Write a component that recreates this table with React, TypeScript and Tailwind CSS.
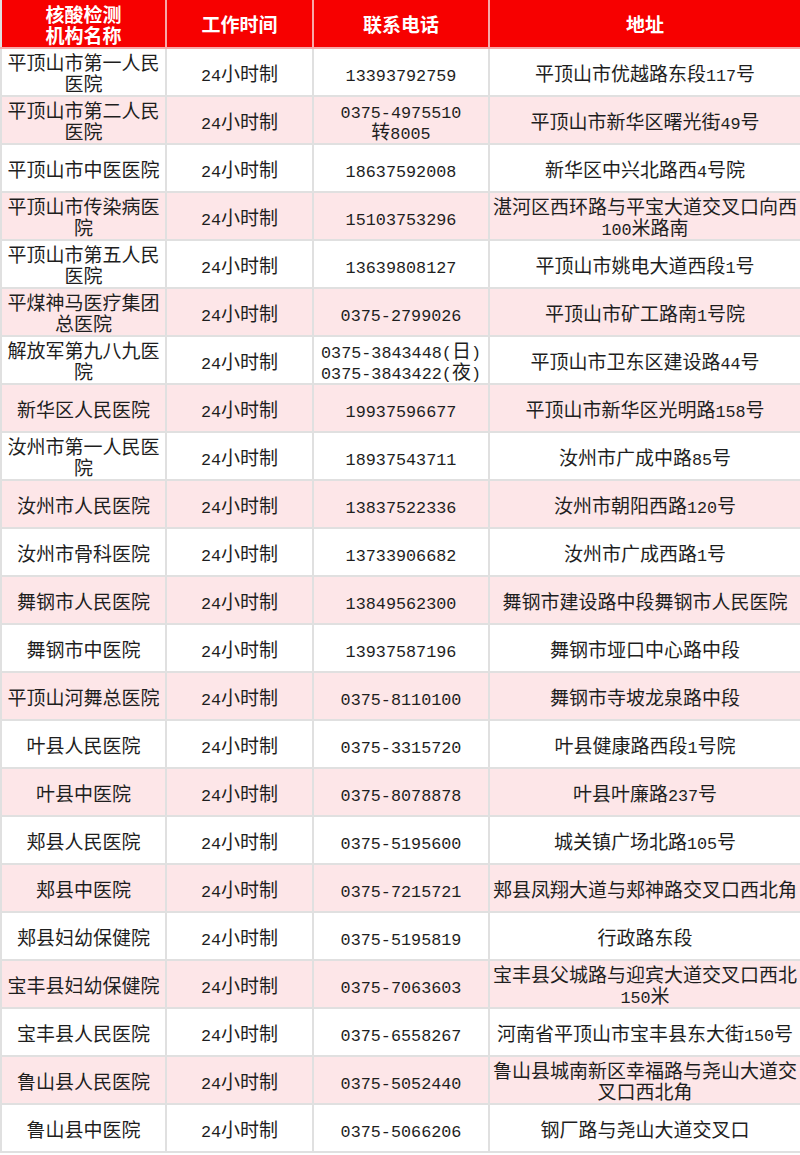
const ROWS: [string, string, string][] = [
  ["平顶山市第一人民\n医院", "13393792759", "平顶山市优越路东段117号"],
  ["平顶山市第二人民\n医院", "0375-4975510\n转8005", "平顶山市新华区曙光街49号"],
  ["平顶山市中医医院", "18637592008", "新华区中兴北路西4号院"],
  ["平顶山市传染病医\n院", "15103753296", "湛河区西环路与平宝大道交叉口向西\n100米路南"],
  ["平顶山市第五人民\n医院", "13639808127", "平顶山市姚电大道西段1号"],
  ["平煤神马医疗集团\n总医院", "0375-2799026", "平顶山市矿工路南1号院"],
  ["解放军第九八九医\n院", "0375-3843448(日)\n0375-3843422(夜)", "平顶山市卫东区建设路44号"],
  ["新华区人民医院", "19937596677", "平顶山市新华区光明路158号"],
  ["汝州市第一人民医\n院", "18937543711", "汝州市广成中路85号"],
  ["汝州市人民医院", "13837522336", "汝州市朝阳西路120号"],
  ["汝州市骨科医院", "13733906682", "汝州市广成西路1号"],
  ["舞钢市人民医院", "13849562300", "舞钢市建设路中段舞钢市人民医院"],
  ["舞钢市中医院", "13937587196", "舞钢市垭口中心路中段"],
  ["平顶山河舞总医院", "0375-8110100", "舞钢市寺坡龙泉路中段"],
  ["叶县人民医院", "0375-3315720", "叶县健康路西段1号院"],
  ["叶县中医院", "0375-8078878", "叶县叶廉路237号"],
  ["郏县人民医院", "0375-5195600", "城关镇广场北路105号"],
  ["郏县中医院", "0375-7215721", "郏县凤翔大道与郏神路交叉口西北角"],
  ["郏县妇幼保健院", "0375-5195819", "行政路东段"],
  ["宝丰县妇幼保健院", "0375-7063603", "宝丰县父城路与迎宾大道交叉口西北\n150米"],
  ["宝丰县人民医院", "0375-6558267", "河南省平顶山市宝丰县东大街150号"],
  ["鲁山县人民医院", "0375-5052440", "鲁山县城南新区幸福路与尧山大道交\n叉口西北角"],
  ["鲁山县中医院", "0375-5066206", "钢厂路与尧山大道交叉口"],
];

// ascii runs get a narrow mono face, like the SimSun digits in the picture
function Mixed({ text }: { text: string }) {
  const lines = text.split("\n");
  return (
    <>
      {lines.map((line, li) => (
        <div key={li} className="h-[21px] leading-[21px] whitespace-nowrap">
          {line.split(/([\x00-\x7F]+)/).map((part, i) =>
            /^[\x00-\x7F]+$/.test(part) ? (
              <span key={i} className="font-['Liberation_Mono',monospace] text-[16.8px] leading-[21px]">
                {part}
              </span>
            ) : (
              <span key={i} className="leading-[21px]">{part}</span>
            )
          )}
        </div>
      ))}
    </>
  );
}

const td = "h-[48px] p-0 text-center align-middle border-2 border-[#e0e0e0]";
const th = "h-[48px] p-0 text-center align-middle border-2 border-[#f7a8a8] border-t-0";

export default function App() {
  return (
    <div className="w-[800px] h-[1155px] bg-white overflow-hidden font-['Noto_Sans_CJK_SC',sans-serif] text-[19px] leading-[21px] text-[#1e1e1e]">
      <table className="w-[800px] table-fixed border-collapse">
        <colgroup>
          <col className="w-[165px]" />
          <col className="w-[147px]" />
          <col className="w-[176px]" />
          <col className="w-[312px]" />
        </colgroup>
        <thead>
          <tr className="bg-[#f70000] text-white font-bold">
            <th className={th + " border-l-[#e0e0e0]"}>
              <div className="h-[21px]">核酸检测</div>
              <div className="h-[21px]">机构名称</div>
            </th>
            <th className={th}>工作时间</th>
            <th className={th}>联系电话</th>
            <th className={th + " border-r-[#e0e0e0]"}>地址</th>
          </tr>
        </thead>
        <tbody>
          {ROWS.map(([name, phone, addr], i) => (
            <tr key={i} className={"h-[48px] " + (i % 2 === 1 ? "bg-[#fde6e8]" : "bg-white")}>
              <td className={td}>
                <Mixed text={name} />
              </td>
              <td className={td}>
                <Mixed text="24小时制" />
              </td>
              <td className={td}>
                <Mixed text={phone} />
              </td>
              <td className={td}>
                <Mixed text={addr} />
              </td>
            </tr>
          ))}
        </tbody>
      </table>
    </div>
  );
}
